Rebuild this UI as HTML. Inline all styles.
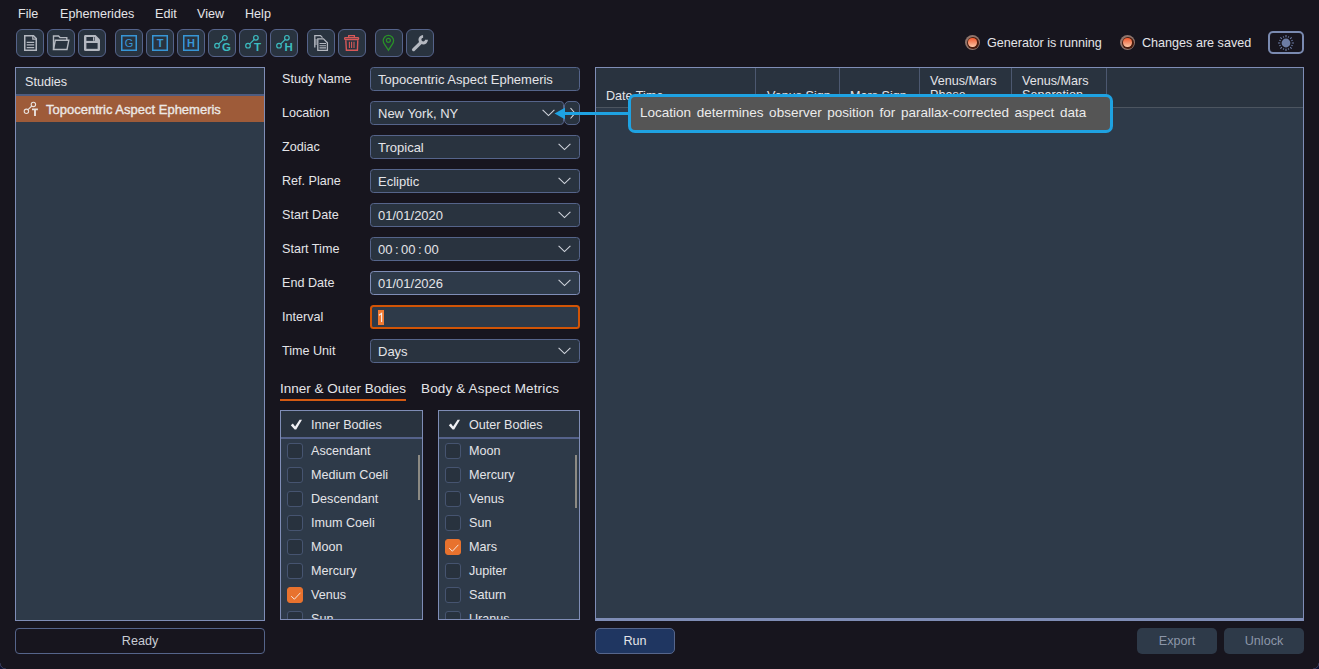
<!DOCTYPE html>
<html><head><meta charset="utf-8">
<style>
*{box-sizing:border-box;margin:0;padding:0}
html,body{width:1319px;height:669px;overflow:hidden;background:#17151e;font-family:"Liberation Sans",sans-serif;color:#e4e4e8;font-size:13px}
.a{position:absolute}
.t{position:absolute;white-space:nowrap;line-height:15px}
.menu{font-size:12.6px}
.tb{position:absolute;top:29px;width:28px;height:28px;border:1px solid #55638a;border-radius:6px;background:#29333f}
.tb svg{position:absolute;left:0;top:0}
.panel{position:absolute;border:1px solid #7f8db6;background:#2e3a49}
.fld{position:absolute;left:370px;width:210px;height:24px;border:1px solid #55648a;border-radius:3.5px;background:#29333f}
.lbl{position:absolute;left:282px;font-size:12.6px;line-height:15px;white-space:nowrap}
.fv{position:absolute;left:7px;top:4px;font-size:13px;line-height:15px;white-space:nowrap}
.chev{position:absolute;right:8px;top:7px}
.list{position:absolute;top:410px;height:210px;border:1px solid #7f8db6;background:#2e3a49;overflow:hidden}
.lh{position:absolute;left:0;top:0;right:0;height:28px;background:#29333f;border-bottom:2px solid #55628a}
.cb{position:absolute;width:16px;height:16px;border:1px solid #465470;border-radius:3px;background:#28323e}
.cb.on{background:#e8722e;border-color:#e8722e}
.it{position:absolute;font-size:12.6px;line-height:15px;white-space:nowrap}
.btn{position:absolute;border-radius:5px}
</style></head><body>
<!-- menu -->
<div class="t menu" style="left:18px;top:7px">File</div>
<div class="t menu" style="left:60px;top:7px">Ephemerides</div>
<div class="t menu" style="left:155px;top:7px">Edit</div>
<div class="t menu" style="left:197px;top:7px">View</div>
<div class="t menu" style="left:245px;top:7px">Help</div>

<!-- toolbar -->
<div class="tb" style="left:16px"><svg width="28" height="28" viewBox="1 1 28 28"><path d="M8.75 6.75H17.5L20.25 9.5V21.25H8.75Z" fill="none" stroke="#b4b8c0" stroke-width="1.5"/><path d="M16.8 6.8V10.2H20.2" fill="none" stroke="#b4b8c0" stroke-width="1.2"/><path d="M10.7 13.3H18.2M10.7 15.9H18.2M10.7 18.6H18.2" stroke="#b4b8c0" stroke-width="1.2"/></svg></div>
<div class="tb" style="left:47px"><svg width="28" height="28" viewBox="1 1 28 28"><path d="M6.5 20.5V7H11.5L13 8.6H19.8V11" fill="none" stroke="#b4b8c0" stroke-width="1.4"/><path d="M8.3 11.3H21.8L20 20.5H6.5Z" fill="none" stroke="#b4b8c0" stroke-width="1.4"/></svg></div>
<div class="tb" style="left:78px"><svg width="28" height="28" viewBox="1 1 28 28"><path d="M7 6H17.5L22 10.5V20.5Q22 22 20.5 22H7.5Q6 22 6 20.5V7.5Q6 6 7 6Z" fill="#b4b8c0"/><rect x="8.4" y="8" width="8.2" height="3.9" fill="#29333f"/><rect x="15" y="8.2" width="1" height="3.5" fill="#b4b8c0"/><rect x="8.4" y="14" width="11.2" height="5.8" fill="#29333f"/></svg></div>
<div class="tb" style="left:115px"><svg width="28" height="28" viewBox="1 1 28 28"><rect x="6.75" y="6.75" width="14.5" height="14.5" fill="none" stroke="#3796d6" stroke-width="1.5"/><text x="14" y="18.2" text-anchor="middle" font-family="Liberation Sans" font-size="11" fill="#3796d6">G</text></svg></div>
<div class="tb" style="left:146px"><svg width="28" height="28" viewBox="1 1 28 28"><rect x="6.75" y="6.75" width="14.5" height="14.5" fill="none" stroke="#3796d6" stroke-width="1.5"/><text x="14" y="18.2" text-anchor="middle" font-family="Liberation Sans" font-size="11" font-weight="bold" fill="#3796d6">T</text></svg></div>
<div class="tb" style="left:177px"><svg width="28" height="28" viewBox="1 1 28 28"><rect x="6.75" y="6.75" width="14.5" height="14.5" fill="none" stroke="#3796d6" stroke-width="1.5"/><text x="14" y="18.2" text-anchor="middle" font-family="Liberation Sans" font-size="11" font-weight="bold" fill="#3796d6">H</text></svg></div>
<div class="tb" style="left:208px"><svg width="28" height="28" viewBox="1 1 28 28"><circle cx="9" cy="16.7" r="2.3" fill="none" stroke="#3cbcc0" stroke-width="1.2"/><circle cx="16.9" cy="8.8" r="2.3" fill="none" stroke="#3cbcc0" stroke-width="1.2"/><path d="M10.6 15.1L15.3 10.4" stroke="#3cbcc0" stroke-width="1.2"/><text x="18.6" y="21.7" text-anchor="middle" font-family="Liberation Sans" font-size="11.5" font-weight="bold" fill="#3cbcc0">G</text></svg></div>
<div class="tb" style="left:239px"><svg width="28" height="28" viewBox="1 1 28 28"><circle cx="9" cy="16.7" r="2.3" fill="none" stroke="#3cbcc0" stroke-width="1.2"/><circle cx="16.9" cy="8.8" r="2.3" fill="none" stroke="#3cbcc0" stroke-width="1.2"/><path d="M10.6 15.1L15.3 10.4" stroke="#3cbcc0" stroke-width="1.2"/><text x="18.6" y="21.7" text-anchor="middle" font-family="Liberation Sans" font-size="11.5" font-weight="bold" fill="#3cbcc0">T</text></svg></div>
<div class="tb" style="left:270px"><svg width="28" height="28" viewBox="1 1 28 28"><circle cx="9" cy="16.7" r="2.3" fill="none" stroke="#3cbcc0" stroke-width="1.2"/><circle cx="16.9" cy="8.8" r="2.3" fill="none" stroke="#3cbcc0" stroke-width="1.2"/><path d="M10.6 15.1L15.3 10.4" stroke="#3cbcc0" stroke-width="1.2"/><text x="18.6" y="21.7" text-anchor="middle" font-family="Liberation Sans" font-size="11.5" font-weight="bold" fill="#3cbcc0">H</text></svg></div>
<div class="tb" style="left:307px"><svg width="28" height="28" viewBox="1 1 28 28"><path d="M7.8 18.4V6.6H13.5L15.5 8.6" fill="none" stroke="#b4b8c0" stroke-width="1.3"/><path d="M10.8 21.3V9.8H16.5L20.4 13.7V21.3Z" fill="#29333f" stroke="#b4b8c0" stroke-width="1.3"/><path d="M12.5 14.5H19M12.5 16.7H19M12.5 18.9H19" stroke="#b4b8c0" stroke-width="1.1"/><path d="M7.8 11H10M7.8 13H10M7.8 15H10" stroke="#b4b8c0" stroke-width="1"/></svg></div>
<div class="tb" style="left:338px"><svg width="28" height="28" viewBox="1 1 28 28"><rect x="6.6" y="8.7" width="14" height="1.8" rx="0.8" fill="none" stroke="#d85858" stroke-width="1.3"/><path d="M10.7 8.6V6.6H16.4V8.6" fill="none" stroke="#d85858" stroke-width="1.3"/><path d="M7.8 11.2L8.4 21.2H19.4L19.8 11.2" fill="none" stroke="#d85858" stroke-width="1.4"/><path d="M11.4 12.8V19M13.6 12.8V19M16 12.8V19" stroke="#d85858" stroke-width="1.1"/></svg></div>
<div class="tb" style="left:375px"><svg width="28" height="28" viewBox="1 1 28 28"><path d="M13.4 21.2L9.6 15.4Q8.2 13.4 8.2 11.6A5.2 5.2 0 0 1 18.6 11.6Q18.6 13.4 17.2 15.4Z" fill="none" stroke="#2a9028" stroke-width="1.3"/><circle cx="13.4" cy="11.3" r="2" fill="none" stroke="#2a9028" stroke-width="1.2"/></svg></div>
<div class="tb" style="left:406px"><svg width="28" height="28" viewBox="1 1 28 28"><path d="M7.6 20.6L15 13.3" stroke="#b4b8c0" stroke-width="3.3" stroke-linecap="round"/><path d="M20.5 10.8A3.3 3.3 0 1 1 17.1 7.4" fill="none" stroke="#b4b8c0" stroke-width="2.9"/></svg></div>

<!-- status -->
<div class="a" style="left:965px;top:35px;width:15px;height:15px;border-radius:50%;background:#8e746c"><div class="a" style="left:1.5px;top:1.5px;width:12px;height:12px;border-radius:50%;background:#4a1c0e"></div><div class="a" style="left:3.3px;top:3.3px;width:8.4px;height:8.4px;border-radius:50%;background:linear-gradient(#f4582c,#f49470 55%,#ffc8a8)"></div></div>
<div class="t" style="left:987px;top:36px;font-size:12.6px">Generator is running</div>
<div class="a" style="left:1120px;top:35px;width:15px;height:15px;border-radius:50%;background:#8e746c"><div class="a" style="left:1.5px;top:1.5px;width:12px;height:12px;border-radius:50%;background:#4a1c0e"></div><div class="a" style="left:3.3px;top:3.3px;width:8.4px;height:8.4px;border-radius:50%;background:linear-gradient(#f4582c,#f49470 55%,#ffc8a8)"></div></div>
<div class="t" style="left:1142px;top:36px;font-size:12.6px">Changes are saved</div>
<div class="a" style="left:1268px;top:31px;width:36px;height:23px;border:2px solid #7a8ab0;border-radius:5px"></div>

<!-- studies panel -->
<div class="panel" style="left:15px;top:67px;width:250px;height:554px">
  <div class="a" style="left:0;top:0;right:0;height:28px;background:#29333f;border-bottom:2px solid #4e5c80"></div>
  <div class="t" style="left:9px;top:7px;font-size:12.6px">Studies</div>
  <div class="a" style="left:0;top:28px;right:0;height:26px;background:#9e5b39"></div>
  <svg class="a" style="left:4px;top:28px" width="20" height="20" viewBox="20 96 20 20"><circle cx="26.4" cy="111.3" r="2.2" fill="none" stroke="#e8e0dc" stroke-width="1.1"/><circle cx="33.4" cy="104.4" r="2.2" fill="none" stroke="#e8e0dc" stroke-width="1.1"/><path d="M28 109.7L31.8 106" stroke="#e8e0dc" stroke-width="1.1"/><path d="M32 109.4H37.9M35 109.4V116" stroke="#e8e0dc" stroke-width="1.9"/></svg><div class="t" style="left:30px;top:34px;font-size:13px;-webkit-text-stroke:0.35px #ece8e6;color:#ece8e6">Topocentric Aspect Ephemeris</div>
</div>
<div class="btn" style="left:15px;top:628px;width:250px;height:26px;border:1px solid #55648a;border-radius:4px"></div>
<div class="t" style="left:15px;top:634px;width:250px;text-align:center;font-size:12.6px;color:#c8ccd4">Ready</div>

<!-- form -->
<div class="lbl" style="top:72px">Study Name</div>
<div class="fld" style="top:67px"><div class="fv">Topocentric Aspect Ephemeris</div></div>
<div class="lbl" style="top:106px">Location</div>
<div class="fld" style="top:101px;width:194px"><div class="fv">New York, NY</div><svg class="chev" width="13" height="8" viewBox="0 0 13 8"><path d="M0.6 0.8L6.5 6.6L12.4 0.8" fill="none" stroke="#d0d4dc" stroke-width="1.1"/></svg></div>
<div class="a" style="left:564px;top:101px;width:16px;height:24px;border:1px solid #55648a;border-radius:5px;background:#29333f"><svg class="a" style="left:4px;top:5px" width="8" height="14" viewBox="0 0 8 14"><path d="M1.5 1L6 6.2L1.5 11.5" fill="none" stroke="#d8dae0" stroke-width="1.1"/></svg></div>
<div class="lbl" style="top:140px">Zodiac</div>
<div class="fld" style="top:135px"><div class="fv">Tropical</div><svg class="chev" width="13" height="8" viewBox="0 0 13 8"><path d="M0.6 0.8L6.5 6.6L12.4 0.8" fill="none" stroke="#d0d4dc" stroke-width="1.1"/></svg></div>
<div class="lbl" style="top:174px">Ref. Plane</div>
<div class="fld" style="top:169px"><div class="fv">Ecliptic</div><svg class="chev" width="13" height="8" viewBox="0 0 13 8"><path d="M0.6 0.8L6.5 6.6L12.4 0.8" fill="none" stroke="#d0d4dc" stroke-width="1.1"/></svg></div>
<div class="lbl" style="top:208px">Start Date</div>
<div class="fld" style="top:203px"><div class="fv">01/01/2020</div><svg class="chev" width="13" height="8" viewBox="0 0 13 8"><path d="M0.6 0.8L6.5 6.6L12.4 0.8" fill="none" stroke="#d0d4dc" stroke-width="1.1"/></svg></div>
<div class="lbl" style="top:242px">Start Time</div>
<div class="fld" style="top:237px"><div class="fv">00<span style="margin:0 2.5px">:</span>00<span style="margin:0 2.5px">:</span>00</div><svg class="chev" width="13" height="8" viewBox="0 0 13 8"><path d="M0.6 0.8L6.5 6.6L12.4 0.8" fill="none" stroke="#d0d4dc" stroke-width="1.1"/></svg></div>
<div class="lbl" style="top:276px">End Date</div>
<div class="fld" style="top:271px;border-color:#7f8db6;background:#2e3a49"><div class="fv">01/01/2026</div><svg class="chev" width="13" height="8" viewBox="0 0 13 8"><path d="M0.6 0.8L6.5 6.6L12.4 0.8" fill="none" stroke="#d0d4dc" stroke-width="1.1"/></svg></div>
<div class="lbl" style="top:310px">Interval</div>
<div class="fld" style="top:305px;border:2px solid #d25406;background:#2e3a49"><div class="a" style="left:6px;top:3px;width:6px;height:15px;background:#f07a32"></div><svg class="a" style="left:6px;top:3px" width="6" height="15" viewBox="0 0 6 15"><path d="M3.6 12V3.3L1 5.2" fill="none" stroke="#f4eef0" stroke-width="1.1"/></svg></div>
<div class="lbl" style="top:344px">Time Unit</div>
<div class="fld" style="top:339px"><div class="fv">Days</div><svg class="chev" width="13" height="8" viewBox="0 0 13 8"><path d="M0.6 0.8L6.5 6.6L12.4 0.8" fill="none" stroke="#d0d4dc" stroke-width="1.1"/></svg></div>

<!-- tabs -->
<div class="t" style="left:280px;top:381px;font-size:13.5px">Inner &amp; Outer Bodies</div>
<div class="a" style="left:280px;top:399px;width:126px;height:2px;background:#d45a12"></div>
<div class="t" style="left:421px;top:381px;font-size:13.5px;letter-spacing:0.15px">Body &amp; Aspect Metrics</div>

<!-- lists -->
<div class="list" style="left:280px;width:143px"><div class="cb" style="left:6px;top:32px"></div><div class="it" style="left:30px;top:33px">Ascendant</div><div class="cb" style="left:6px;top:56px"></div><div class="it" style="left:30px;top:57px">Medium Coeli</div><div class="cb" style="left:6px;top:80px"></div><div class="it" style="left:30px;top:81px">Descendant</div><div class="cb" style="left:6px;top:104px"></div><div class="it" style="left:30px;top:105px">Imum Coeli</div><div class="cb" style="left:6px;top:128px"></div><div class="it" style="left:30px;top:129px">Moon</div><div class="cb" style="left:6px;top:152px"></div><div class="it" style="left:30px;top:153px">Mercury</div><div class="cb on" style="left:6px;top:176px"><svg class="a" style="left:2px;top:3px" width="12" height="10" viewBox="0 0 12 10"><path d="M1.2 5.2L4.4 8.2L10.4 1.8" fill="none" stroke="#f6e6dc" stroke-width="1"/></svg></div><div class="it" style="left:30px;top:177px">Venus</div><div class="cb" style="left:6px;top:200px"></div><div class="it" style="left:30px;top:201px">Sun</div><div class="lh"></div><svg class="a" style="left:0;top:0" width="30" height="28" viewBox="0 0 30 28"><path d="M9.8 14.2L11.9 12.6L14.1 15.4L18.6 8.8H21L15.2 18.4H13.6Z" fill="#f0f0f4"/></svg><div class="it" style="left:30px;top:7px">Inner Bodies</div><div class="a" style="left:137px;top:44px;width:2px;height:45px;background:#8c8a84"></div></div>
<div class="list" style="left:438px;width:142px"><div class="cb" style="left:6px;top:32px"></div><div class="it" style="left:30px;top:33px">Moon</div><div class="cb" style="left:6px;top:56px"></div><div class="it" style="left:30px;top:57px">Mercury</div><div class="cb" style="left:6px;top:80px"></div><div class="it" style="left:30px;top:81px">Venus</div><div class="cb" style="left:6px;top:104px"></div><div class="it" style="left:30px;top:105px">Sun</div><div class="cb on" style="left:6px;top:128px"><svg class="a" style="left:2px;top:3px" width="12" height="10" viewBox="0 0 12 10"><path d="M1.2 5.2L4.4 8.2L10.4 1.8" fill="none" stroke="#f6e6dc" stroke-width="1"/></svg></div><div class="it" style="left:30px;top:129px">Mars</div><div class="cb" style="left:6px;top:152px"></div><div class="it" style="left:30px;top:153px">Jupiter</div><div class="cb" style="left:6px;top:176px"></div><div class="it" style="left:30px;top:177px">Saturn</div><div class="cb" style="left:6px;top:200px"></div><div class="it" style="left:30px;top:201px">Uranus</div><div class="lh"></div><svg class="a" style="left:0;top:0" width="30" height="28" viewBox="0 0 30 28"><path d="M9.8 14.2L11.9 12.6L14.1 15.4L18.6 8.8H21L15.2 18.4H13.6Z" fill="#f0f0f4"/></svg><div class="it" style="left:30px;top:7px">Outer Bodies</div><div class="a" style="left:136px;top:44px;width:2px;height:53px;background:#8c8a84"></div></div>

<!-- table -->
<div class="panel" style="left:595px;top:67px;width:709px;height:554px;overflow:hidden;border-bottom-width:3px">
  <div class="a" style="left:0;top:0;right:0;height:40px;background:#29333f;border-bottom:1px solid #4c5560"></div>
  <div class="a" style="left:159px;top:0;width:1px;height:39px;background:#4c5870"></div>
  <div class="a" style="left:243px;top:0;width:1px;height:39px;background:#4c5870"></div>
  <div class="a" style="left:323px;top:0;width:1px;height:39px;background:#4c5870"></div>
  <div class="a" style="left:415px;top:0;width:1px;height:39px;background:#4c5870"></div>
  <div class="a" style="left:510px;top:0;width:1px;height:39px;background:#4c5870"></div>
  <div class="t" style="left:10px;top:21px;font-size:12.6px">Date Time</div>
  <div class="t" style="left:171px;top:21px;font-size:12.6px">Venus Sign</div>
  <div class="t" style="left:254px;top:21px;font-size:12.6px">Mars Sign</div>
  <div class="t" style="left:334px;top:6px;font-size:12.6px;line-height:14px">Venus/Mars<br>Phase</div>
  <div class="t" style="left:426px;top:6px;font-size:12.6px;line-height:14px">Venus/Mars<br>Separation</div>
</div>

<!-- bottom buttons -->
<div class="btn" style="left:595px;top:628px;width:80px;height:26px;background:#1f3661;border:1px solid #56668c"></div>
<div class="t" style="left:595px;top:634px;width:80px;text-align:center;font-size:12.6px">Run</div>
<div class="btn" style="left:1137px;top:628px;width:80px;height:26px;background:#2e3a49"></div>
<div class="t" style="left:1137px;top:634px;width:80px;text-align:center;font-size:12.6px;color:#8c96a8">Export</div>
<div class="btn" style="left:1224px;top:628px;width:80px;height:26px;background:#2e3a49"></div>
<div class="t" style="left:1224px;top:634px;width:80px;text-align:center;font-size:12.6px;color:#8c96a8">Unlock</div>

<!-- tooltip -->
<svg class="a" style="left:550px;top:104px" width="80" height="20" viewBox="550 104 80 20"><path d="M563 113.5H628" stroke="#1ea2e2" stroke-width="3"/><path d="M554.5 113.5L565 107.8V119.2Z" fill="#1ea2e2"/></svg>
<div class="a" style="left:628px;top:94px;width:485px;height:39px;border:3px solid #1ea2e2;border-radius:7px;background:#555555"></div>
<div class="t" style="left:640px;top:105px;font-size:13.5px;line-height:16px;color:#ececec;word-spacing:1.9px">Location determines observer position for parallax-corrected aspect data</div>
<!-- sun -->
<svg class="a" style="left:1276px;top:34px" width="20" height="18" viewBox="0 0 20 18"><circle cx="10" cy="9" r="4.4" fill="#6c7ca4"/><path d="M15.80 9.00L18.00 9.00M15.36 11.22L16.65 11.76M14.10 13.10L15.66 14.66M12.22 14.36L12.76 15.65M10.00 14.80L10.00 17.00M7.78 14.36L7.24 15.65M5.90 13.10L4.34 14.66M4.64 11.22L3.35 11.76M4.20 9.00L2.00 9.00M4.64 6.78L3.35 6.24M5.90 4.90L4.34 3.34M7.78 3.64L7.24 2.35M10.00 3.20L10.00 1.00M12.22 3.64L12.76 2.35M14.10 4.90L15.66 3.34M15.36 6.78L16.65 6.24" stroke="#6c7ca4" stroke-width="1.1"/></svg>
<svg class="a" style="left:0;top:663px" width="6" height="6" viewBox="0 0 6 6"><path d="M0 0A6 6 0 0 0 6 6H0Z" fill="#0c1030"/><path d="M0 0A6 6 0 0 0 6 6" fill="none" stroke="#50587a" stroke-width="0.7"/></svg>
<svg class="a" style="left:1313px;top:663px" width="6" height="6" viewBox="0 0 6 6"><path d="M6 0A6 6 0 0 1 0 6H6Z" fill="#0c1030"/><path d="M6 0A6 6 0 0 1 0 6" fill="none" stroke="#50587a" stroke-width="0.7"/></svg>
</body></html>
